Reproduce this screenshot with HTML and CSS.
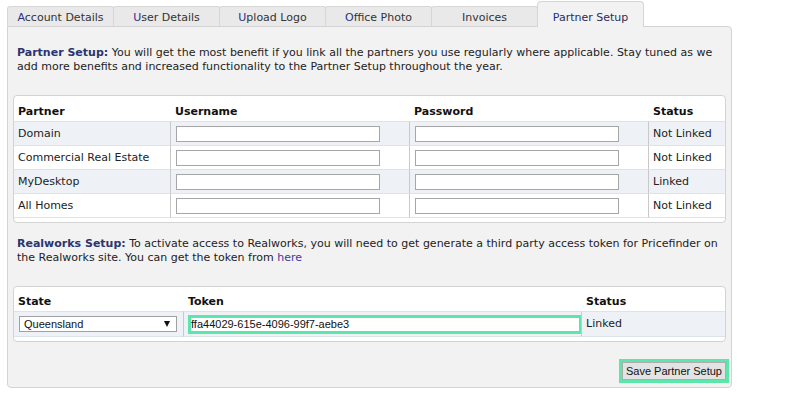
FILE: index.html
```html
<!DOCTYPE html>
<html lang="en">
<head>
<meta charset="utf-8">
<title>Partner Setup</title>
<link rel="stylesheet" href="styles.css">
</head>
<body>
<div class="page">
  <ul class="tabs">
    <li class="tab">Account Details</li>
    <li class="tab">User Details</li>
    <li class="tab">Upload Logo</li>
    <li class="tab">Office Photo</li>
    <li class="tab">Invoices</li>
    <li class="tab active">Partner Setup</li>
  </ul>
  <div class="panel">
    <p class="intro"><b class="lead">Partner Setup:</b> You will get the most benefit if you link all the partners you use regularly where applicable. Stay tuned as we add more benefits and increased functionality to the Partner Setup throughout the year.</p>

    <div class="grid-box">
      <table class="grid partners">
        <colgroup>
          <col class="c-partner"><col class="c-user"><col class="c-pass"><col>
        </colgroup>
        <thead>
          <tr><th>Partner</th><th>Username</th><th>Password</th><th>Status</th></tr>
        </thead>
        <tbody>
          <tr class="alt"><td>Domain</td><td class="ic"><input type="text" class="field"></td><td class="ic"><input type="password" class="field"></td><td>Not Linked</td></tr>
          <tr><td>Commercial Real Estate</td><td class="ic"><input type="text" class="field"></td><td class="ic"><input type="password" class="field"></td><td>Not Linked</td></tr>
          <tr class="alt"><td>MyDesktop</td><td class="ic"><input type="text" class="field"></td><td class="ic"><input type="password" class="field"></td><td>Linked</td></tr>
          <tr class="last"><td>All Homes</td><td class="ic"><input type="text" class="field"></td><td class="ic"><input type="password" class="field"></td><td>Not Linked</td></tr>
        </tbody>
      </table>
    </div>

    <p class="intro second"><b class="lead">Realworks Setup:</b> To activate access to Realworks, you will need to get generate a third party access token for Pricefinder on the Realworks site. You can get the token from <a href="#" class="link">here</a></p>

    <div class="grid-box">
      <table class="grid realworks">
        <colgroup>
          <col class="c-state"><col class="c-token"><col>
        </colgroup>
        <thead>
          <tr><th>State</th><th>Token</th><th>Status</th></tr>
        </thead>
        <tbody>
          <tr class="alt last"><td class="ic"><span class="select-wrap"><select class="select"><option>Queensland</option></select></span></td><td class="ic tok"><input type="text" class="token" value="ffa44029-615e-4096-99f7-aebe3"></td><td>Linked</td></tr>
        </tbody>
      </table>
    </div>

    <div class="actions">
      <button type="button" class="save">Save Partner Setup</button>
    </div>
  </div>
</div>
</body>
</html>
```
FILE: styles.css
```css
html, body {
  margin: 0;
  padding: 0;
  background: #ffffff;
}

.page {
  font-family: "DejaVu Sans", Verdana, sans-serif;
  font-size: 11px;
  color: #222222;
  width: 786px;
}

.tabs {
  list-style: none;
  margin: 0;
  padding: 0 0 0 7px;
  height: 26px;
  display: flex;
  align-items: flex-end;
}

.tab {
  box-sizing: border-box;
  width: 107px;
  height: 20px;
  margin-right: -1px;
  padding-top: 2px;
  line-height: 18px;
  text-align: center;
  background: #e9e9e9;
  border: 1px solid #d6d6d6;
  border-bottom: none;
  border-radius: 3px 3px 0 0;
  color: #333333;
}

.tab::first-letter {
  color: #2a2f86;
}

.tab.active {
  position: relative;
  z-index: 1;
  height: 26px;
  padding-top: 7px;
  margin-bottom: -1px;
  background: #f2f2f2;
  border-radius: 4px 4px 0 0;
  color: #2c2c52;
}

.panel {
  box-sizing: border-box;
  width: 725px;
  margin-left: 7px;
  background: #f2f2f2;
  border: 1px solid #d3d3d3;
  border-radius: 0 4px 4px 4px;
  padding: 0 5px 7px 5px;
}

.intro {
  margin: 19px 0 0 0;
  padding: 0 4px;
  line-height: 14px;
}

.intro.second {
  margin-top: 14px;
}

.lead {
  color: #2b356e;
}

.link {
  color: #3f3a9a;
  text-decoration: none;
}

.grid-box {
  margin-top: 21px;
  background: #ffffff;
  border: 1px solid #d3d3d3;
  border-radius: 4px;
  padding-bottom: 4px;
}

.grid {
  width: 100%;
  border-collapse: separate;
  border-spacing: 0;
  table-layout: fixed;
}

.c-partner { width: 156px; }
.c-user { width: 239px; }
.c-pass { width: 239px; }
.c-state { width: 169px; }
.c-token { width: 398px; }

.grid th {
  height: 23px;
  padding: 0 4px 2px 4px;
  vertical-align: bottom;
  text-align: left;
  font-weight: bold;
  color: #111111;
  line-height: 14px;
}

.grid td {
  height: 23px;
  padding: 0 4px;
  border-top: 1px solid #dde3ea;
  vertical-align: middle;
  white-space: nowrap;
  line-height: 14px;
}

.grid tr.last td {
  border-bottom: 1px solid #dde3ea;
}

.grid tr.alt td {
  background: #eef2f7;
}

.grid td + td {
  border-left: 1px solid #c9c9c9;
}

.grid th + th {
  border-left: 1px solid transparent;
}

.grid td.ic {
  padding-left: 5px;
}

.field {
  box-sizing: border-box;
  width: 204px;
  height: 16px;
  margin: 0;
  padding: 0 2px;
  border: 1px solid #a6a6a6;
  background: #ffffff;
  font-family: "Liberation Sans", Arial, sans-serif;
  font-size: 11px;
  display: block;
}

.realworks td {
  height: 24px;
}

.realworks th {
  height: 22px;
}

.select-wrap {
  position: relative;
  display: block;
  width: 158px;
}

.select {
  box-sizing: border-box;
  display: block;
  width: 158px;
  height: 16px;
  margin: 0;
  padding: 0 0 0 4px;
  appearance: none;
  -webkit-appearance: none;
  background: #ffffff;
  border: 1px solid #a0a0a0;
  border-radius: 0;
  font-family: "Liberation Sans", Arial, sans-serif;
  font-size: 11px;
  line-height: 14px;
  color: #111111;
}

.select-wrap::after {
  content: "";
  position: absolute;
  right: 7px;
  top: 5px;
  width: 0;
  height: 0;
  border-left: 3px solid transparent;
  border-right: 3px solid transparent;
  border-top: 6px solid #111111;
  pointer-events: none;
}

.grid td.tok {
  padding-left: 4px;
  padding-right: 0;
}

.token {
  box-sizing: border-box;
  display: block;
  width: 394px;
  height: 19px;
  margin: 0;
  padding: 0;
  border: 3px solid #5ce6ab;
  background: #ffffff;
  outline: none;
  font-family: "Liberation Sans", Arial, sans-serif;
  font-size: 11px;
  color: #111111;
}

.actions {
  display: flex;
  justify-content: flex-end;
  margin-top: 20px;
}

.save {
  box-sizing: border-box;
  height: 18px;
  margin: 0;
  padding: 0 3px;
  font-family: "Liberation Sans", Arial, sans-serif;
  font-size: 11px;
  line-height: 14px;
  color: #111111;
  background: #e3e3e3;
  border: 1px solid #adadad;
  border-radius: 0;
  outline: 3px solid #5ce6ab;
  outline-offset: 0;
}
```
